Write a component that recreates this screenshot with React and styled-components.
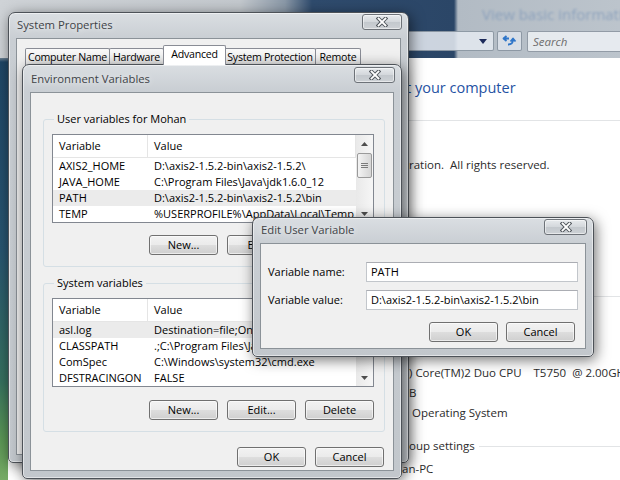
import React from 'react'
import styled, { createGlobalStyle } from 'styled-components'

const GlobalStyle = createGlobalStyle`
  html, body { margin: 0; padding: 0; }
  body {
    width: 620px;
    height: 480px;
    overflow: hidden;
    font-family: "Open Sans", "Noto Sans", sans-serif;
    font-size: 11px;
    color: #000;
  }
`

const Desktop = styled.div`
  position: relative;
  width: 620px;
  height: 480px;
  overflow: hidden;
  background: linear-gradient(180deg, #bfc4c9 0, #a8afb5 55px, #1f4666 62px, #285570 250px, #36705f 380px, #5b9755 440px, #77ab66 480px);
`

/* ---------- background explorer window ---------- */

const Explorer = styled.div`
  position: absolute;
  inset: 0;
  display: flex;
  flex-direction: column;
`

const ExplorerHeader = styled.div`
  height: 58px;
  flex: none;
  display: flex;
  flex-direction: column;
  background: linear-gradient(90deg, #cfd3d7 0, #c3c8cd 240px, #8a98a7 285px, #2f4b6d 312px, #2b4667 454px, #b2bbc4 458px, #bcc4cc 620px);
`

const BlurTitle = styled.div`
  height: 30px;
  padding-left: 482px;
  font-size: 15px;
  line-height: 28px;
  color: #7f98b8;
  opacity: 0.75;
  filter: blur(1.3px);
  white-space: nowrap;
`

const NavRow = styled.div`
  display: flex;
  align-items: center;
  height: 22px;
  padding-left: 300px;
  gap: 3px;
`

const AddressBox = styled.div`
  width: 194px;
  height: 20px;
  display: flex;
  align-items: center;
  justify-content: flex-end;
  padding-right: 6px;
  box-sizing: border-box;
  background: rgba(226, 232, 239, 0.88);
  border: 1px solid rgba(110, 122, 136, 0.7);
  border-radius: 2px;
`

const RefreshButton = styled.div`
  width: 25px;
  height: 20px;
  box-sizing: border-box;
  display: flex;
  align-items: center;
  justify-content: center;
  background: rgba(222, 228, 235, 0.85);
  border: 1px solid rgba(110, 122, 136, 0.7);
  border-radius: 2px;
`

const SearchBox = styled.div`
  flex: 1;
  height: 21px;
  margin-left: 2px;
  box-sizing: border-box;
  padding-left: 5px;
  line-height: 19px;
  font-size: 11.5px;
  font-style: italic;
  color: #6d6d6d;
  background: rgba(232, 236, 240, 0.95);
  border: 1px solid rgba(110, 122, 136, 0.7);
  border-right: none;
  border-radius: 2px 0 0 2px;
`

const ExplorerContent = styled.div`
  flex: 1;
  margin-left: 8px;
  background: #fff;
  padding-left: 401px;
  display: flex;
  flex-direction: column;
  font-size: 11.5px;
  color: #2b2b2b;
  white-space: nowrap;
`

const Heading = styled.div`
  margin-top: 20px;
  margin-left: -3px;
  font-size: 14.5px;
  line-height: 20px;
  color: #1f52a3;
`

const Rule = styled.div`
  height: 1px;
  background: #e2e4e6;
  margin-top: ${p => p.$gap}px;
`

const InfoLine = styled.div`
  line-height: 16px;
  margin-top: ${p => p.$gap}px;
  margin-left: ${p => p.$indent || 0}px;
`

const SectionLine = styled.div`
  display: flex;
  align-items: center;
  gap: 4px;
  line-height: 16px;
  margin-top: ${p => p.$gap}px;
  color: #2b2b2b;

  &::after {
    content: "";
    flex: 1;
    height: 1px;
    background: #e2e4e6;
  }
`

/* ---------- window chrome ---------- */

const Window = styled.div`
  position: absolute;
  left: ${p => p.$x}px;
  top: ${p => p.$y}px;
  width: ${p => p.$w}px;
  height: ${p => p.$h}px;
  box-sizing: border-box;
  display: flex;
  flex-direction: column;
  padding: 0 7px 7px 7px;
  border: 1px solid #4d5258;
  border-radius: 7px 7px 5px 5px;
  background: linear-gradient(180deg, #dadee2 0, #c9ced3 26px, #c2c7cc 100%);
  box-shadow: inset 0 0 0 1px rgba(255, 255, 255, 0.5), 2px 3px 14px rgba(0, 0, 0, 0.55);
`

const TitleBar = styled.div`
  height: ${p => p.$h || 25}px;
  flex: none;
  display: flex;
  justify-content: space-between;
  align-items: flex-start;
`

const Title = styled.div`
  padding: ${p => p.$pad || 3}px 0 0 1px;
  font-size: 11.3px;
  line-height: 18px;
  color: #404347;
  text-shadow: 0 0 6px rgba(255, 255, 255, 0.9);
`

const CloseButton = styled.div`
  width: ${p => p.$w || 40}px;
  height: 16px;
  margin-top: ${p => p.$top || 1}px;
  margin-right: -1px;
  box-sizing: border-box;
  display: flex;
  align-items: center;
  justify-content: center;
  border: 1px solid #6d7278;
  border-radius: 3px;
  background: linear-gradient(180deg, #e7eaed 0, #d3d7db 50%, #c3c8cd 51%, #cdd1d5 100%);
  box-shadow: inset 0 0 0 1px rgba(255, 255, 255, 0.5);
`

const Body = styled.div`
  flex: 1;
  min-height: 0;
  display: flex;
  flex-direction: column;
  border: 1px solid #8b9298;
  background: #f0f0f0;
  padding: ${p => p.$pad};
  overflow: hidden;
`

const CloseGlyph = () => (
  <svg width="12" height="10" viewBox="0 0 12 10">
    <path d="M2.5 1.5 L9.5 8.5 M9.5 1.5 L2.5 8.5" stroke="#50565c" strokeWidth="3.8" strokeLinecap="square" />
    <path d="M2.5 1.5 L9.5 8.5 M9.5 1.5 L2.5 8.5" stroke="#ffffff" strokeWidth="1.8" strokeLinecap="square" />
  </svg>
)

/* ---------- tabs ---------- */

const TabStrip = styled.div`
  display: flex;
  align-items: flex-end;
  padding: 6px 0 0 8px;
  height: 20px;
`

const Tab = styled.div`
  width: ${p => p.$w}px;
  height: ${p => (p.$active ? 20 : 17)}px;
  box-sizing: border-box;
  padding-bottom: ${p => (p.$active ? 3 : 0)}px;
  margin: ${p => (p.$active ? '0 -1px 0 -1px' : '0 0 0 -1px')};
  position: relative;
  z-index: ${p => (p.$active ? 1 : 0)};
  border: 1px solid #898c95;
  border-bottom: none;
  border-radius: 2px 2px 0 0;
  background: ${p => (p.$active ? '#ffffff' : 'linear-gradient(180deg, #f9f9f9 0, #ebebeb 100%)')};
  font-size: 10.6px;
  letter-spacing: -0.25px;
  line-height: 16px;
  text-align: center;
  white-space: nowrap;

  &:first-child { margin-left: 0; }
`

/* ---------- group boxes and lists ---------- */

const Group = styled.fieldset`
  margin: ${p => p.$top || 0}px 0 0 0;
  padding: 0 10px 11px 8px;
  border: 1px solid #d5dfe5;
  border-radius: 3px;
  min-width: 0;
`

const Legend = styled.legend`
  margin-left: 2px;
  padding: 0 3px;
  line-height: 16px;
`

const ListView = styled.div`
  margin-top: 7px;
  height: 89px;
  box-sizing: border-box;
  border: 1px solid #828790;
  background: #fff;
  display: flex;
  overflow: hidden;
`

const ListColumns = styled.div`
  flex: 1;
  min-width: 0;
  display: flex;
  flex-direction: column;
`

const HeaderRow = styled.div`
  display: grid;
  grid-template-columns: 95px 1fr;
  height: 22px;
  flex: none;
  border-bottom: 1px solid #e5e5e5;
  line-height: 22px;
`

const HeaderCell = styled.div`
  padding-left: ${p => p.$pad}px;
  border-right: 1px solid #e5e5e5;
`

const Row = styled.div`
  display: grid;
  grid-template-columns: 95px 1fr;
  height: 16px;
  flex: none;
  line-height: 16px;
  background: ${p => (p.$selected ? '#ebebeb' : 'transparent')};
  white-space: nowrap;
`

const Cell = styled.div`
  padding-left: ${p => p.$pad}px;
  overflow: hidden;
`

const ScrollBar = styled.div`
  width: 17px;
  flex: none;
  display: flex;
  flex-direction: column;
  background: linear-gradient(90deg, #e9e9e9 0, #f6f6f6 100%);
`

const ScrollArrow = styled.div`
  height: 17px;
  flex: none;
  display: flex;
  align-items: center;
  justify-content: center;
`

const ScrollTrack = styled.div`
  flex: 1;
  padding-top: ${p => p.$offset}px;
`

const Thumb = styled.div`
  height: ${p => p.$h}px;
  margin: 0 1px;
  box-sizing: border-box;
  border: 1px solid #9a9a9a;
  border-radius: 2px;
  background: linear-gradient(90deg, #f4f4f4 0, #e4e4e4 50%, #d6d6d6 100%);
  display: flex;
  align-items: center;
  justify-content: center;
`

const Arrow = ({ up }) => (
  <svg width="7" height="4" viewBox="0 0 7 4">
    <path d={up ? 'M0 4 L3.5 0 L7 4 Z' : 'M0 0 L7 0 L3.5 4 Z'} fill="#4d4d4d" />
  </svg>
)

const Grip = () => (
  <svg width="7" height="7" viewBox="0 0 7 7">
    <path d="M0 1.5 H7 M0 3.5 H7 M0 5.5 H7" stroke="#7a7a7a" strokeWidth="1" />
  </svg>
)

/* ---------- buttons and inputs ---------- */

const ButtonRow = styled.div`
  display: flex;
  justify-content: flex-end;
  gap: ${p => p.$gap || 9}px;
  margin-top: ${p => p.$top}px;
  margin-right: ${p => p.$right || 0}px;
`

const Button = styled.div`
  width: 69px;
  height: 20px;
  box-sizing: border-box;
  border: 1px solid #707070;
  border-radius: 3px;
  background: linear-gradient(180deg, #f2f2f2 0, #ebebeb 48%, #dddddd 52%, #cfcfcf 100%);
  box-shadow: inset 0 0 0 1px rgba(255, 255, 255, 0.6);
  text-align: center;
  line-height: 18px;
`

const FieldGrid = styled.div`
  display: grid;
  grid-template-columns: 98px 1fr;
  row-gap: 8px;
  align-items: center;
`

const Label = styled.div`
  line-height: 20px;
`

const Input = styled.div`
  height: 20px;
  box-sizing: border-box;
  padding-left: 4px;
  line-height: 18px;
  background: #fff;
  border: 1px solid #c2c6cb;
  border-top-color: #abadb3;
  white-space: nowrap;
`

/* ---------- data ---------- */

const userVars = [
  ['AXIS2_HOME', 'D:\\axis2-1.5.2-bin\\axis2-1.5.2\\'],
  ['JAVA_HOME', 'C:\\Program Files\\Java\\jdk1.6.0_12'],
  ['PATH', 'D:\\axis2-1.5.2-bin\\axis2-1.5.2\\bin', true],
  ['TEMP', '%USERPROFILE%\\AppData\\Local\\Temp'],
  ['TMP', '%USERPROFILE%\\AppData\\Local\\Temp'],
]

const systemVars = [
  ['asl.log', 'Destination=file;OnFirstLog=command,environment', true],
  ['CLASSPATH', '.;C:\\Program Files\\Java\\jre6\\lib\\ext\\QTJava.zip'],
  ['ComSpec', 'C:\\Windows\\system32\\cmd.exe'],
  ['DFSTRACINGON', 'FALSE'],
  ['FP_NO_HOST_CHECK', 'NO'],
]

const tabs = [
  ['Computer Name', 85],
  ['Hardware', 55],
  ['Advanced', 63],
  ['System Protection', 92],
  ['Remote', 46],
]

const VarList = ({ rows, thumbTop, thumbHeight }) => (
  <ListView>
    <ListColumns>
      <HeaderRow>
        <HeaderCell $pad={6}>Variable</HeaderCell>
        <HeaderCell $pad={6}>Value</HeaderCell>
      </HeaderRow>
      {rows.map(([name, value, selected]) => (
        <Row key={name} $selected={selected}>
          <Cell $pad={6}>{name}</Cell>
          <Cell $pad={6}>{value}</Cell>
        </Row>
      ))}
    </ListColumns>
    <ScrollBar>
      <ScrollArrow><Arrow up /></ScrollArrow>
      <ScrollTrack $offset={thumbTop}>
        <Thumb $h={thumbHeight}><Grip /></Thumb>
      </ScrollTrack>
      <ScrollArrow><Arrow /></ScrollArrow>
    </ScrollBar>
  </ListView>
)

const RefreshIcon = () => (
  <svg width="15" height="13" viewBox="0 0 15 13">
    <path d="M7 3.5 H2.5 M4.5 1 L1.5 3.5 L4.5 6" stroke="#2f76c9" strokeWidth="1.8" fill="none" strokeLinejoin="round" />
    <path d="M6 9.5 C9 9.5 11 8.5 11 5 M8.5 6.5 L11 3.5 L13.5 6.5" stroke="#2f76c9" strokeWidth="1.8" fill="none" strokeLinejoin="round" />
  </svg>
)

export default function App() {
  return (
    <Desktop>
      <GlobalStyle />

      <Explorer>
        <ExplorerHeader>
          <BlurTitle>View basic information</BlurTitle>
          <NavRow>
            <AddressBox>
              <svg width="8" height="5" viewBox="0 0 8 5"><path d="M0 0 H8 L4 5 Z" fill="#1c2a5a" /></svg>
            </AddressBox>
            <RefreshButton><RefreshIcon /></RefreshButton>
            <SearchBox>Search</SearchBox>
          </NavRow>
        </ExplorerHeader>
        <ExplorerContent>
          <Heading>t your computer</Heading>
          <Rule $gap={22} />
          <InfoLine $gap={36}>ration.&nbsp; All rights reserved.</InfoLine>
          <Rule $gap={123} />
          <InfoLine $gap={68}>) Core(TM)2 Duo CPU&nbsp;&nbsp;&nbsp;&nbsp;T5750&nbsp; @ 2.00GHz</InfoLine>
          <InfoLine $gap={4}>B</InfoLine>
          <InfoLine $gap={4} $indent={3}>Operating System</InfoLine>
          <SectionLine $gap={17}>oup settings</SectionLine>
          <InfoLine $gap={7} $indent={-7}>an-PC</InfoLine>
        </ExplorerContent>
      </Explorer>

      <Window $x={8} $y={12} $w={401} $h={451}>
        <TitleBar>
          <Title>System Properties</Title>
          <CloseButton $w={40}><CloseGlyph /></CloseButton>
        </TitleBar>
        <Body $pad="0">
          <TabStrip>
            {tabs.map(([t, w]) => (
              <Tab key={t} $w={w} $active={t === 'Advanced'}>{t}</Tab>
            ))}
          </TabStrip>
        </Body>
      </Window>

      <Window $x={22} $y={64} $w={380} $h={415}>
        <TitleBar $h={27}>
          <Title $pad={5}>Environment Variables</Title>
          <CloseButton $w={41} $top={2}><CloseGlyph /></CloseButton>
        </TitleBar>
        <Body $pad="18px 8px 8px 12px">
          <Group>
            <Legend>User variables for Mohan</Legend>
            <VarList rows={userVars} thumbTop={1} thumbHeight={25} />
            <ButtonRow $top={12}>
              <Button>New...</Button>
              <Button>Edit...</Button>
              <Button>Delete</Button>
            </ButtonRow>
          </Group>
          <Group $top={8}>
            <Legend>System variables</Legend>
            <VarList rows={systemVars} thumbTop={1} thumbHeight={25} />
            <ButtonRow $top={13}>
              <Button>New...</Button>
              <Button>Edit...</Button>
              <Button>Delete</Button>
            </ButtonRow>
          </Group>
          <ButtonRow $top={15} $right={1}>
            <Button>OK</Button>
            <Button>Cancel</Button>
          </ButtonRow>
        </Body>
      </Window>

      <Window $x={252} $y={217} $w={342} $h={140}>
        <TitleBar>
          <Title>Edit User Variable</Title>
          <CloseButton $w={43}><CloseGlyph /></CloseButton>
        </TitleBar>
        <Body $pad="18px 7px 7px 7px">
          <FieldGrid>
            <Label>Variable name:</Label>
            <Input>PATH</Input>
            <Label>Variable value:</Label>
            <Input>D:\axis2-1.5.2-bin\axis2-1.5.2\bin</Input>
          </FieldGrid>
          <ButtonRow $top={12} $gap={8} $right={3}>
            <Button>OK</Button>
            <Button>Cancel</Button>
          </ButtonRow>
        </Body>
      </Window>
    </Desktop>
  )
}
